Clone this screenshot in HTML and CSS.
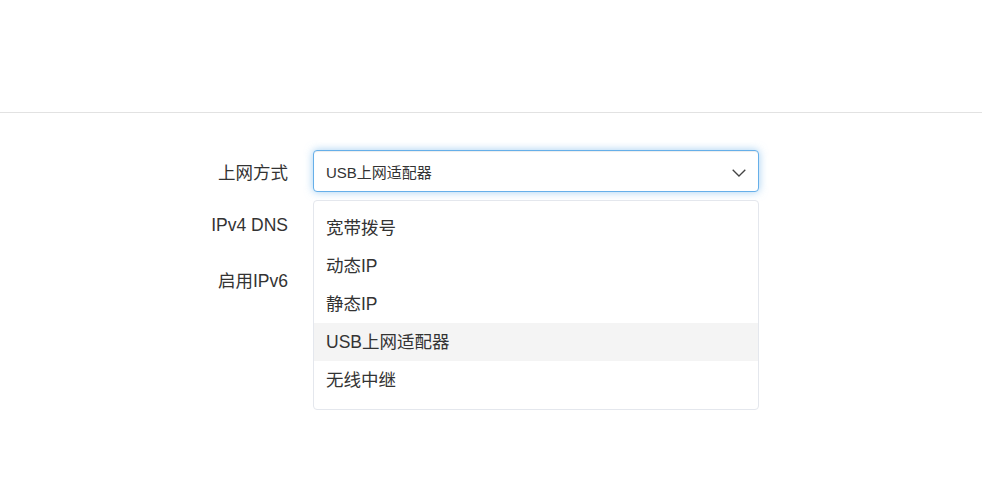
FILE: index.html
```html
<!DOCTYPE html>
<html lang="zh-CN">
<head>
<meta charset="utf-8">
<title>上网设置</title>
<link rel="stylesheet" href="styles.css">
</head>
<body>
<div class="topbar"></div>
<main class="form">
  <div class="row">
    <label class="label">上网方式</label>
    <div class="control">
      <div class="select">
        <span class="select-value">USB上网适配器</span>
        <svg class="chevron" width="14" height="8" viewBox="0 0 14 8"><polyline points="0.7,0.7 7,7 13.3,0.7" fill="none" stroke="#444" stroke-width="1.3"/></svg>
      </div>
      <ul class="dropdown">
        <li class="option">宽带拨号</li>
        <li class="option">动态IP</li>
        <li class="option">静态IP</li>
        <li class="option active">USB上网适配器</li>
        <li class="option">无线中继</li>
      </ul>
    </div>
  </div>
  <div class="row">
    <label class="label">IPv4 DNS</label>
    <div class="control"></div>
  </div>
  <div class="row">
    <label class="label">启用IPv6</label>
    <div class="control"></div>
  </div>
</main>
</body>
</html>
```
FILE: styles.css
```css
* { box-sizing: border-box; }
html, body { margin: 0; padding: 0; background: #fff; }
body {
  font-family: "Liberation Sans", "Noto Sans CJK SC", sans-serif;
  color: #333;
  min-height: 479px;
}
.topbar {
  height: 113px;
  border-bottom: 1px solid #e2e2e2;
}
.form {
  padding-top: 37px;
  padding-left: 188px;
  display: flex;
  flex-direction: column;
  gap: 12px;
  min-height: 360px;
}
.row {
  display: grid;
  grid-template-columns: 100px 446px;
  column-gap: 25px;
  height: 42px;
  align-items: center;
}
.label {
  text-align: right;
  font-size: 17.5px;
  color: #333;
}
.control {
  position: relative;
  height: 42px;
}
.select {
  height: 42px;
  border: 1px solid #66afe9;
  border-radius: 4px;
  box-shadow: inset 0 1px 1px rgba(0,0,0,.075), 0 0 8px rgba(102,175,233,.6);
  display: flex;
  align-items: center;
  justify-content: space-between;
  padding: 0 12px 0 12px;
  background: #fff;
}
.select-value { font-size: 15px; color: #333; }
.chevron { margin-top: 4px; }
.dropdown {
  position: absolute;
  top: 50px;
  left: 0;
  width: 446px;
  height: 210px;
  margin: 0;
  padding: 8px 0 0;
  list-style: none;
  background: #fff;
  border: 1px solid #e4e7ed;
  border-radius: 4px;
  z-index: 2;
}
.option {
  height: 38px;
  line-height: 38px;
  padding-left: 12px;
  font-size: 17.5px;
  color: #333;
}
.option.active { background: #f4f4f4; }
```
